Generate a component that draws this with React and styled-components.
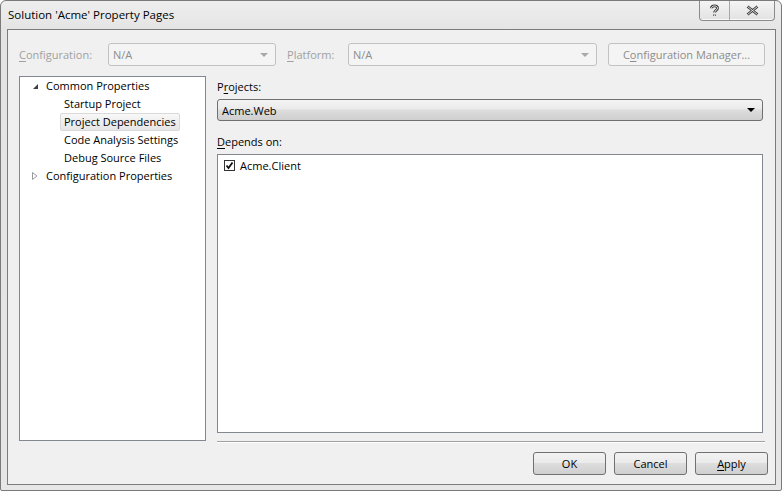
import styled, { createGlobalStyle } from "styled-components";

const GlobalStyle = createGlobalStyle`
  html, body {
    margin: 0;
    padding: 0;
    background: #ffffff;
  }
  body {
    font-family: "Segoe UI", "Open Sans", "Noto Sans", sans-serif;
    font-size: 11px;
    color: #000;
  }
`;

const Window = styled.div`
  width: 780px;
  height: 489px;
  border: 1px solid #7a7a7a;
  border-radius: 6px 6px 2px 2px;
  background: linear-gradient(#eeeeee, #e4e4e4 30px, #e6e6e6);
  display: flex;
  flex-direction: column;
  overflow: hidden;
`;

const TitleBar = styled.div`
  height: 28px;
  display: flex;
  align-items: flex-start;
  padding-left: 7px;
`;

const Title = styled.div`
  font-size: 11.5px;
  line-height: 28px;
  color: #000;
`;

const Caption = styled.div`
  margin-left: auto;
  margin-right: 6px;
  display: flex;
  height: 19px;
  border: 1px solid #8a8a8a;
  border-top: none;
  border-radius: 0 0 4px 4px;
  background: linear-gradient(#f4f4f4, #e2e2e2);
  box-shadow: inset 0 -1px 0 #fafafa;
`;

const CaptionButton = styled.div`
  width: ${(p) => p.w}px;
  display: flex;
  align-items: center;
  justify-content: center;
  & + & {
    border-left: 1px solid #a8a8a8;
  }
`;

const Client = styled.div`
  flex: 1;
  margin: 0 5px 5px 6px;
  border: 1px solid #7c7c7c;
  background: #f0f0f0;
  display: flex;
  flex-direction: column;
  padding: 13px 7px 0 11px;
`;

const TopRow = styled.div`
  display: flex;
  align-items: center;
  height: 23px;
`;

const Label = styled.span`
  color: ${(p) => (p.disabled ? "#a0a0a0" : "#000")};
  width: ${(p) => (p.w ? `${p.w}px` : "auto")};
  margin-left: ${(p) => p.ml || 0}px;
  flex-shrink: 0;
  & u {
    text-decoration: underline;
    text-underline-offset: 2px;
  }
`;

const Combo = styled.div`
  width: ${(p) => p.w}px;
  height: ${(p) => p.h || 23}px;
  box-sizing: border-box;
  display: flex;
  align-items: center;
  padding: 0 7px 0 4px;
  border-radius: 3px;
  border: 1px solid ${(p) => (p.disabled ? "#c2c2c2" : "#707070")};
  color: ${(p) => (p.disabled ? "#8d8d8d" : "#000")};
  background: ${(p) =>
    p.disabled ? "#f4f4f4" : "linear-gradient(#f3f3f3 0%, #ebebeb 45%, #dddddd 50%, #cfcfcf 100%)"};
  flex-shrink: 0;
  & > span {
    flex: 1;
  }
`;

const Arrow = styled.div`
  width: 0;
  height: 0;
  border-left: 4px solid transparent;
  border-right: 4px solid transparent;
  border-top: 4px solid ${(p) => (p.disabled ? "#a8a8a8" : "#000")};
`;

const Button = styled.div`
  width: ${(p) => p.w}px;
  height: 23px;
  box-sizing: border-box;
  margin-left: ${(p) => p.ml || 0}px;
  border-radius: 3px;
  border: 1px solid ${(p) => (p.disabled ? "#c2c2c2" : "#707070")};
  color: ${(p) => (p.disabled ? "#8d8d8d" : "#000")};
  background: ${(p) =>
    p.disabled ? "#f4f4f4" : "linear-gradient(#f2f2f2 0%, #ebebeb 45%, #dddddd 50%, #cfcfcf 100%)"};
  display: flex;
  align-items: center;
  justify-content: center;
  flex-shrink: 0;
  & u {
    text-underline-offset: 2px;
  }
`;

const Body = styled.div`
  display: flex;
  align-items: flex-start;
  margin-top: 10px;
`;

const Tree = styled.div`
  width: 187px;
  height: 365px;
  box-sizing: border-box;
  border: 1px solid #828790;
  background: #fff;
`;

const TreeRow = styled.div`
  height: 18px;
  display: flex;
  align-items: center;
  padding-left: ${(p) => p.indent}px;
`;

const Expander = styled.div`
  width: 14px;
  display: flex;
  justify-content: center;
`;

const Node = styled.span`
  height: 16px;
  line-height: 16px;
  padding: 0 3px;
  border-radius: 2px;
  border: 1px solid ${(p) => (p.selected ? "#d9d9d9" : "transparent")};
  background: ${(p) => (p.selected ? "linear-gradient(#f8f8f8, #e5e5e5)" : "transparent")};
`;

const RightPane = styled.div`
  margin-left: 11px;
  width: 548px;
  display: flex;
  flex-direction: column;
`;

const FieldLabel = styled.div`
  height: 23px;
  line-height: 22px;
  & u {
    text-underline-offset: 2px;
  }
`;

const Gap = styled.div`
  height: ${(p) => p.h}px;
`;

const ListBox = styled.div`
  width: 546px;
  height: 279px;
  box-sizing: border-box;
  border: 1px solid #828790;
  background: #fff;
  padding: 2px 0 0 6px;
`;

const CheckRow = styled.div`
  display: flex;
  align-items: center;
  height: 16px;
  gap: 5px;
`;

const CheckBox = styled.div`
  width: 11px;
  height: 11px;
  box-sizing: border-box;
  border: 1px solid #333;
  background: #fff;
  display: flex;
  align-items: center;
  justify-content: center;
`;

const Separator = styled.div`
  margin-top: 8px;
  height: 0;
  border-top: 1px solid #a0a0a0;
  border-bottom: 1px solid #ffffff;
`;

const Footer = styled.div`
  display: flex;
  justify-content: flex-end;
  gap: 8px;
  margin-top: 9px;
`;

function TriangleDown() {
  return (
    <svg width="7" height="7" viewBox="0 0 7 7">
      <path d="M6 1 L6 6 L1 6 Z" fill="#404040" />
    </svg>
  );
}

function TriangleRight() {
  return (
    <svg width="8" height="10" viewBox="0 0 8 10">
      <path d="M1.5 1.5 L6 5 L1.5 8.5 Z" fill="#fff" stroke="#9a9a9a" strokeWidth="1" />
    </svg>
  );
}

function HelpGlyph() {
  const d = "M2.5 4.2 C2.5 1.2 8.5 1.2 8.5 4.2 C8.5 6.3 5.5 6.3 5.5 8.6 M5.5 10.6 L5.5 11.8";
  return (
    <svg width="11" height="14" viewBox="0 0 11 14">
      <path d={d} fill="none" stroke="#3a3a3a" strokeWidth="2.8" />
      <path d={d} fill="none" stroke="#f4f4f4" strokeWidth="1" />
    </svg>
  );
}

function CloseGlyph() {
  const d = "M1.5 1.5 L11.5 9.5 M11.5 1.5 L1.5 9.5";
  return (
    <svg width="13" height="11" viewBox="0 0 13 11">
      <path d={d} stroke="#3a3a3a" strokeWidth="2.6" />
      <path d={d} stroke="#f2f2f2" strokeWidth="0.9" />
    </svg>
  );
}

export default function App() {
  return (
    <>
      <GlobalStyle />
      <Window>
        <TitleBar>
          <Title>Solution 'Acme' Property Pages</Title>
          <Caption>
            <CaptionButton w={29}>
              <HelpGlyph />
            </CaptionButton>
            <CaptionButton w={44}>
              <CloseGlyph />
            </CaptionButton>
          </Caption>
        </TitleBar>
        <Client>
          <TopRow>
            <Label disabled w={89}>
              <u>C</u>onfiguration:
            </Label>
            <Combo disabled w={168}>
              <span>N/A</span>
              <Arrow disabled />
            </Combo>
            <Label disabled w={61} ml={11}>
              <u>P</u>latform:
            </Label>
            <Combo disabled w={249}>
              <span>N/A</span>
              <Arrow disabled />
            </Combo>
            <Button disabled w={157} ml={11}>
              <span>
                C<u>o</u>nfiguration Manager...
              </span>
            </Button>
          </TopRow>
          <Body>
            <Tree>
              <TreeRow indent={8}>
                <Expander>
                  <TriangleDown />
                </Expander>
                <Node>Common Properties</Node>
              </TreeRow>
              <TreeRow indent={40}>
                <Node>Startup Project</Node>
              </TreeRow>
              <TreeRow indent={40}>
                <Node selected>Project Dependencies</Node>
              </TreeRow>
              <TreeRow indent={40}>
                <Node>Code Analysis Settings</Node>
              </TreeRow>
              <TreeRow indent={40}>
                <Node>Debug Source Files</Node>
              </TreeRow>
              <TreeRow indent={8}>
                <Expander>
                  <TriangleRight />
                </Expander>
                <Node>Configuration Properties</Node>
              </TreeRow>
            </Tree>
            <RightPane>
              <FieldLabel>
                P<u>r</u>ojects:
              </FieldLabel>
              <Combo w={546} h={22}>
                <span>Acme.Web</span>
                <Arrow />
              </Combo>
              <Gap h={10} />
              <FieldLabel>
                <u>D</u>epends on:
              </FieldLabel>
              <ListBox>
                <CheckRow>
                  <CheckBox>
                    <svg width="9" height="9" viewBox="0 0 9 9">
                      <path d="M1.5 4.5 L3.5 7 L7.5 1.5" fill="none" stroke="#111" strokeWidth="1.8" />
                    </svg>
                  </CheckBox>
                  <span>Acme.Client</span>
                </CheckRow>
              </ListBox>
              <Separator />
            </RightPane>
          </Body>
          <Footer>
            <Button w={73}>OK</Button>
            <Button w={73}>Cancel</Button>
            <Button w={73}>
              <span>
                <u>A</u>pply
              </span>
            </Button>
          </Footer>
        </Client>
      </Window>
    </>
  );
}
